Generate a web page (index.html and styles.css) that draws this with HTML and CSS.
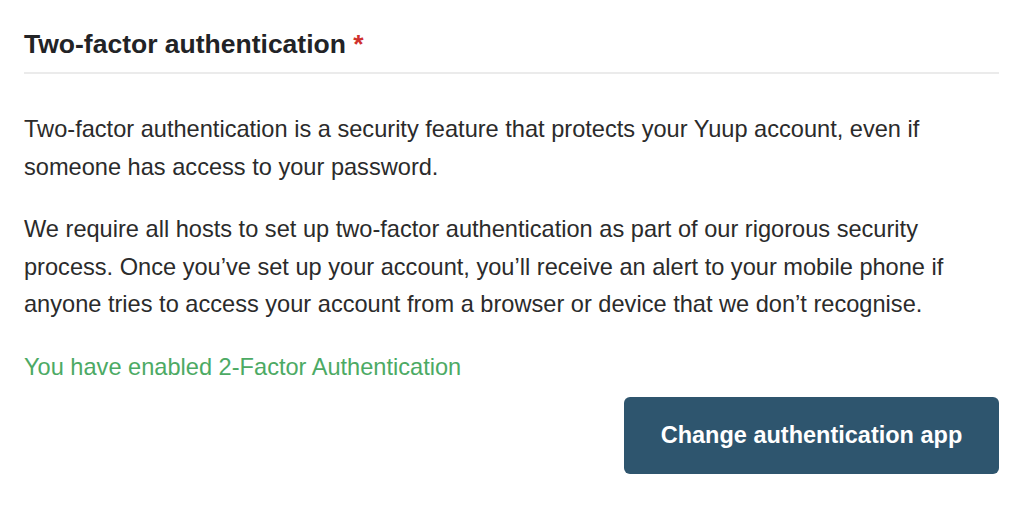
FILE: index.html
```html
<!DOCTYPE html>
<html>
<head>
<meta charset="utf-8">
<link rel="stylesheet" href="styles.css">
</head>
<body>
<section class="panel">
  <h2 class="title">Two-factor authentication <span class="req">*</span></h2>
  <div class="body">
    <p class="text">Two-factor authentication is a security feature that protects your Yuup account, even if someone has access to your password.</p>
    <p class="text">We require all hosts to set up two-factor authentication as part of our rigorous security process. Once you’ve set up your account, you’ll receive an alert to your mobile phone if anyone tries to access your account from a browser or device that we don’t recognise.</p>
    <p class="status">You have enabled 2-Factor Authentication</p>
    <div class="actions">
      <button class="btn">Change authentication app</button>
    </div>
  </div>
</section>
</body>
</html>
```
FILE: styles.css
```css
html, body {
  margin: 0;
  padding: 0;
  background: #fff;
}
body {
  font-family: "Liberation Sans", Arial, sans-serif;
  color: #222;
}
.panel {
  padding: 28px 25px 0 24px;
}
.title {
  margin: 0;
  font-size: 26.5px;
  font-weight: bold;
  line-height: 32px;
  color: #222326;
  padding-bottom: 12px;
  border-bottom: 2px solid #ebebeb;
}
.req {
  color: #d0312d;
}
.body {
  padding-top: 37px;
}
.text {
  margin: 0 0 25px;
  font-size: 23.6px;
  line-height: 37.5px;
  color: #2b2b2b;
}
.status {
  margin: 0;
  font-size: 23.6px;
  line-height: 37.5px;
  color: #4caa64;
}
.actions {
  display: flex;
  justify-content: flex-end;
  margin-top: 11px;
}
.btn {
  width: 375px;
  height: 77px;
  border: none;
  border-radius: 6px;
  background: #2e556e;
  color: #fff;
  font-family: "Liberation Sans", Arial, sans-serif;
  font-size: 23.5px;
  font-weight: bold;
}
```
